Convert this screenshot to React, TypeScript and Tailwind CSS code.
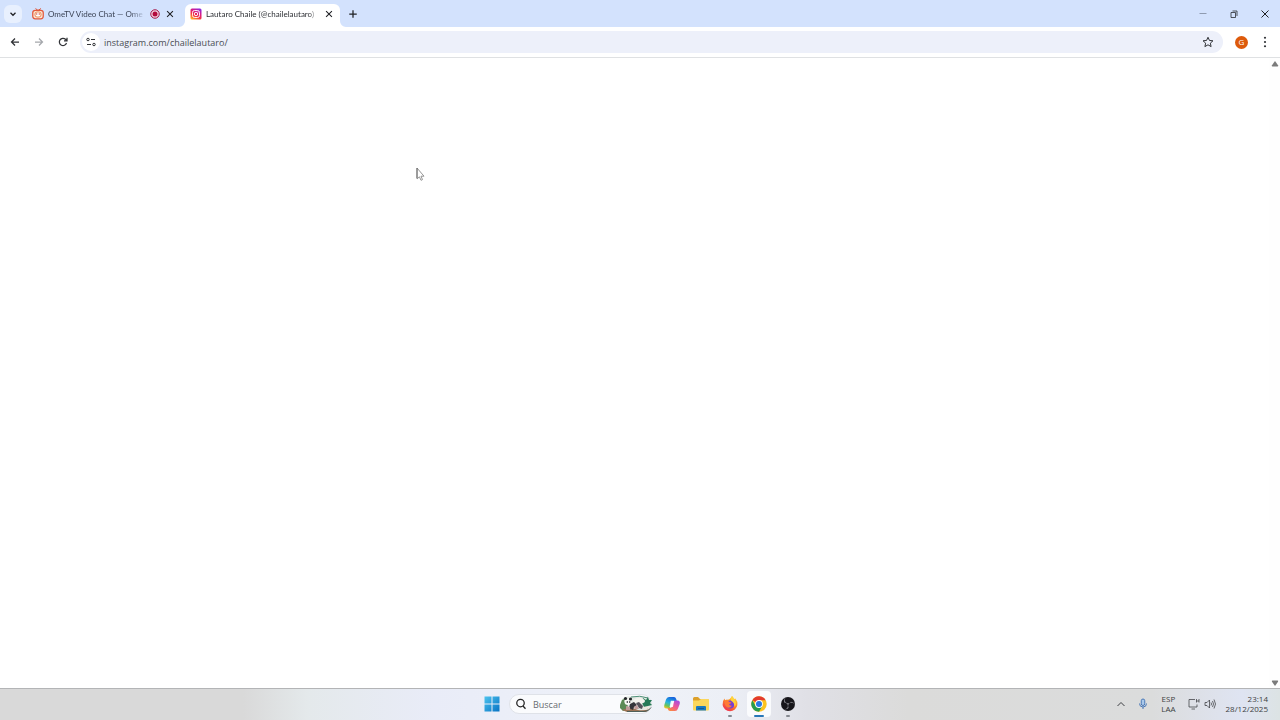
import type { ReactNode } from "react";
import { SiObsstudio } from "react-icons/si";

function Stroke({ className, width = 2, children }: { className: string; width?: number; children: ReactNode }) {
  return (
    <svg
      viewBox="0 0 24 24"
      className={className}
      fill="none"
      stroke="currentColor"
      strokeWidth={width}
      aria-hidden="true"
    >
      {children}
    </svg>
  );
}

function CloseIcon() {
  return (
    <Stroke className="size-[10px]" width={2.5}>
      <path d="M5 5l14 14M19 5L5 19" />
    </Stroke>
  );
}

function OmeTvIcon() {
  return (
    <svg viewBox="0 0 24 24" className="size-3 shrink-0" aria-hidden="true">
      <path d="M7 1l5 4 6-4" fill="none" stroke="#d9573f" strokeWidth="2" />
      <rect x="1.5" y="4.5" width="21" height="17" rx="5" fill="#fbe3d3" stroke="#e2593b" strokeWidth="2.5" />
      <rect x="6" y="8" width="12" height="10" rx="4" fill="#fff" stroke="#ee8a50" strokeWidth="2" />
      <circle cx="9.5" cy="12" r="1.3" fill="#c7392f" />
      <circle cx="14.5" cy="12" r="1.3" fill="#c7392f" />
    </svg>
  );
}

function InstagramIcon() {
  return (
    <svg viewBox="0 0 24 24" className="size-3 shrink-0" aria-hidden="true">
      <defs>
        <linearGradient id="insta" x1="0.2" y1="1" x2="0.8" y2="0">
          <stop offset="0" stopColor="#fdb52c" />
          <stop offset="0.35" stopColor="#f5363f" />
          <stop offset="0.65" stopColor="#d91a87" />
          <stop offset="1" stopColor="#8a2be0" />
        </linearGradient>
      </defs>
      <rect x="1" y="1" width="22" height="22" rx="3" fill="url(#insta)" />
      <rect x="5" y="5" width="14" height="14" rx="4" fill="none" stroke="#fff" strokeWidth="1.8" />
      <circle cx="12" cy="12" r="3.4" fill="none" stroke="#fff" strokeWidth="1.8" />
      <circle cx="16" cy="8" r="1" fill="#fff" />
    </svg>
  );
}

function TabStrip() {
  return (
    <header className="flex h-[27px] items-center bg-[#d3e2fd] pl-1 text-[#1f2024]">
      <button aria-label="Buscar pestañas" className="flex size-[18px] items-center justify-center rounded-md bg-[#e8f0fe]">
        <Stroke className="size-[10px]" width={3}>
          <path d="M6 9l6 6 6-6" />
        </Stroke>
      </button>
      <div className="ml-[10px] flex w-[153px] items-center">
        <OmeTvIcon />
        <button className="ml-1 w-[98px] whitespace-nowrap text-left font-['Lato',sans-serif] text-[8px] leading-3 text-[#3c4456] [mask-image:linear-gradient(to_right,#000_84%,transparent)]">
          OmeTV Video Chat — Ome
        </button>
        <svg viewBox="0 0 20 20" className="ml-1 size-[10px]" aria-hidden="true">
          <circle cx="10" cy="10" r="8.5" fill="#f3d5e3" stroke="#a51546" strokeWidth="2" />
          <circle cx="10" cy="10" r="5" fill="#b3093c" />
        </svg>
        <button aria-label="Cerrar OmeTV" className="ml-[5px]">
          <CloseIcon />
        </button>
      </div>
      <div className="relative flex h-[23px] w-[155px] items-center self-end rounded-t-md bg-white pb-1 pl-[5px]">
        <svg viewBox="0 0 6 6" className="absolute bottom-0 -left-[6px] size-[6px] fill-white" aria-hidden="true">
          <path d="M6 0v6H0a6 6 0 006-6z" />
        </svg>
        <svg viewBox="0 0 6 6" className="absolute -right-[6px] bottom-0 size-[6px] fill-white" aria-hidden="true">
          <path d="M0 0v6h6a6 6 0 01-6-6z" />
        </svg>
        <InstagramIcon />
        <button className="ml-1 w-[112px] whitespace-nowrap text-left font-['Lato',sans-serif] text-[8px] leading-3 text-[#2c2e33] [mask-image:linear-gradient(to_right,#000_92%,transparent)]">
          Lautaro Chaile (@chailelautaro)
        </button>
        <button aria-label="Cerrar Instagram" className="ml-[6px]">
          <CloseIcon />
        </button>
      </div>
      <button aria-label="Nueva pestaña" className="ml-2">
        <Stroke className="size-[10px]" width={3}>
          <path d="M12 3v18M3 12h18" />
        </Stroke>
      </button>
      <div className="ml-auto flex items-center gap-[19px] pr-[9px]">
        <button aria-label="Minimizar" className="text-[#8f9bb0]">
          <Stroke className="size-3">
            <path d="M5 11h14" />
          </Stroke>
        </button>
        <button aria-label="Restaurar">
          <Stroke className="size-3" width={1.5}>
            <path d="M6 9h9v10H6zM9 6h9v10" />
          </Stroke>
        </button>
        <button aria-label="Cerrar">
          <Stroke className="size-3">
            <path d="M5 5l14 14M19 5L5 19" />
          </Stroke>
        </button>
      </div>
    </header>
  );
}

function Toolbar() {
  return (
    <div className="flex h-[31px] items-center border-b border-[#dfe1e3] bg-white pl-[9px] text-[#303236]">
      <nav className="flex items-center gap-3">
        <button aria-label="Atrás">
          <Stroke className="size-3" width={2.5}>
            <path d="M20 12H5M12 5l-7 7 7 7" />
          </Stroke>
        </button>
        <button aria-label="Adelante" className="text-[#a5a8ac]">
          <Stroke className="size-3" width={2.5}>
            <path d="M4 12h15M12 5l7 7-7 7" />
          </Stroke>
        </button>
        <button aria-label="Recargar">
          <Stroke className="size-3" width={2.5}>
            <path d="M19 14a7.300 7.300 0 11-2-7.500l2.500 2.500M20 3.500v6h-6" />
          </Stroke>
        </button>
      </nav>
      <div className="ml-[11px] flex h-[22px] flex-1 items-center rounded-full bg-[#edf0fa] pr-[9px] pl-[2px]">
        <button aria-label="Información del sitio" className="flex size-[18px] items-center justify-center rounded-full bg-white">
          <Stroke className="size-3" width={2}>
            <circle cx="6" cy="7" r="2.500" />
            <path d="M12 7h8M4 17h8" />
            <circle cx="18" cy="17" r="2.500" />
          </Stroke>
        </button>
        <input
          aria-label="Dirección"
          defaultValue="instagram.com/chailelautaro/"
          className="ml-1 h-4 min-w-0 flex-1 bg-transparent text-[9px] text-[#4a4d53] outline-none"
        />
        <button aria-label="Agregar a favoritos">
          <Stroke className="size-3" width={2}>
            <path d="M12 2.500l2.900 6.400 7 .7-5.200 4.700 1.500 6.900L12 17.600l-6.200 3.600 1.500-6.900-5.200-4.700 7-.7z" />
          </Stroke>
        </button>
      </div>
      <button
        aria-label="Perfil"
        className="ml-3 flex size-[13px] items-center justify-center rounded-full bg-[#dd5a0b] text-[8px] leading-none text-white"
      >
        G
      </button>
      <button aria-label="Menú" className="mr-[9px] ml-[11px]">
        <svg viewBox="0 0 24 24" className="size-3" fill="currentColor" aria-hidden="true">
          <circle cx="12" cy="3.500" r="2.200" />
          <circle cx="12" cy="12" r="2.200" />
          <circle cx="12" cy="20.500" r="2.200" />
        </svg>
      </button>
    </div>
  );
}

function Viewport() {
  return (
    <main className="relative flex flex-1 justify-end bg-white">
      <div className="flex w-[11px] flex-col items-center justify-between bg-[#fefefe] pt-[3px] pb-[2px]">
        <svg viewBox="0 0 8 6" className="h-[6px] w-2 fill-[#7b7b7b]" aria-hidden="true">
          <path d="M4 0l3 4.200q.6 1.300-.6 1.300H1.600Q.4 5.500 1 4.200z" />
        </svg>
        <svg viewBox="0 0 8 6" className="h-[6px] w-2 fill-[#7b7b7b]" aria-hidden="true">
          <path d="M4 6l3-4.200Q7.600.5 6.400.5H1.600Q.4.500 1 1.800z" />
        </svg>
      </div>
      <svg viewBox="0 0 10 15" className="absolute top-[109px] left-[416px] h-[15px] w-[10px]" aria-hidden="true">
        <path d="M1 1v11l2.400-2.200 1.600 3.500 1.500-.7L5 9.200h3z" fill="#fff" stroke="#8a8a8a" strokeWidth="0.9" />
        <path d="M1 1v10" stroke="#555" strokeWidth="0.8" />
      </svg>
    </main>
  );
}

function WindowsLogo() {
  return (
    <svg viewBox="0 0 16 16" className="size-4" aria-hidden="true">
      <defs>
        <linearGradient id="win" x1="0" y1="0" x2="1" y2="1">
          <stop offset="0" stopColor="#4cc3ee" />
          <stop offset="1" stopColor="#0873c4" />
        </linearGradient>
      </defs>
      <path d="M.5.500h7v7h-7zM8.500.500h7v7h-7zM.5 8.500h7v7h-7zM8.500 8.500h7v7h-7z" fill="url(#win)" />
    </svg>
  );
}

function PandaArt() {
  return (
    <svg viewBox="0 0 34 18" className="h-[18px] w-[34px] shrink-0" aria-hidden="true">
      <rect x="1.500" y="1.500" width="31" height="15" rx="7.500" fill="#e3e9e4" />
      <path d="M12 2q9-2 17 1" fill="none" stroke="#4d8f78" />
      <path d="M1 10l2-5 4-2 2 5-1 7-4 1-3-3z" fill="#5c8a55" />
      <path d="M23 8l1-5 3 2 2-3 1 3h3l-2 3 2 2-4 1v3l-4-2z" fill="#267a57" />
      <path d="M3 15q8-4 16 0 6 1 12-1l-4 3H8z" fill="#9b7355" />
      <ellipse cx="20" cy="6" rx="6" ry="3" fill="#f4f3ee" />
      <circle cx="9" cy="6.500" r="3.600" fill="#faf9f5" />
      <circle cx="6.500" cy="3.500" r="1.600" fill="#24272a" />
      <circle cx="11.500" cy="4" r="1.600" fill="#24272a" />
      <path d="M7 7l2-1v2zM10 6l2 1-2 1zM11 9l4-2 3 3-3 2-1 3-4-2z" fill="#35353a" />
      <path d="M17 8l3-1 4 4-1 3-3-1z" fill="#55525a" />
      <path d="M7 11l4 1v3H7zM15 12l3-2 2 4h-4z" fill="#c09a9a" />
      <path d="M24 12l5-1 2 2-6 2z" fill="#eee7de" />
      <path d="M8 16.500h17q5 0 7-4" fill="none" stroke="#50605a" />
    </svg>
  );
}

function CopilotIcon() {
  return (
    <svg viewBox="0 0 18 16" className="h-4 w-[18px]" aria-hidden="true">
      <defs>
        <linearGradient id="copA" x1="0.6" y1="0" x2="0.2" y2="1">
          <stop offset="0" stopColor="#1762dd" />
          <stop offset="0.5" stopColor="#24b6de" />
          <stop offset="0.8" stopColor="#72c451" />
          <stop offset="1" stopColor="#f3c522" />
        </linearGradient>
        <linearGradient id="copB" x1="0.8" y1="0" x2="0.2" y2="1">
          <stop offset="0" stopColor="#a84be1" />
          <stop offset="0.5" stopColor="#ed5798" />
          <stop offset="1" stopColor="#fb8d3c" />
        </linearGradient>
      </defs>
      <path d="M6 1h5q1.600 0 2.200 2l.6 2H11q-1.400 0-2 1.600L7.500 11Q7 12.500 5.500 12.500H3.500Q.5 12.500 1.300 9L3 3.500Q3.800 1 6 1z" fill="url(#copA)" />
      <path d="M12 15H7q-1.600 0-2.200-2l-.3-1H7q1.400 0 2-1.600L10.500 6Q11 4.500 12.500 4.500h2Q17.500 4.500 16.700 8L15 12.500Q14.200 15 12 15z" fill="url(#copB)" />
      <path d="M7.800 4.700h3.400L9.900 11H6.600z" fill="#fff" opacity="0.9" />
    </svg>
  );
}

function FolderIcon() {
  return (
    <svg viewBox="0 0 18 16" className="h-4 w-[18px]" aria-hidden="true">
      <path d="M1 2.500Q1 1 2.500 1H6l2 2h7.500Q17 3 17 4.500V8H1z" fill="#dca02a" />
      <path d="M1 4.500h6l2-1.500h7q1 0 1 1v9.500q0 1-1 1H2q-1 0-1-1z" fill="#fbd75c" />
      <path d="M4 14.500V11q0-1 1-1h8q1 0 1 1v3.500z" fill="#1a79bf" />
      <path d="M6 12.500h6" stroke="#125b98" />
    </svg>
  );
}

function FirefoxIcon() {
  return (
    <svg viewBox="0 0 16 16" className="size-4" aria-hidden="true">
      <defs>
        <linearGradient id="fox" x1="0.8" y1="0" x2="0.2" y2="1">
          <stop offset="0" stopColor="#fde047" />
          <stop offset="0.45" stopColor="#ff8a26" />
          <stop offset="1" stopColor="#ed2454" />
        </linearGradient>
      </defs>
      <path d="M10 0q1.500 1.500 2 3l1.500-.6Q16 5.500 15.400 9A7.500 7.500 0 01.6 9Q.2 5 2.500 2.500L3 4.200 5 3.600Q8 4 10 0z" fill="url(#fox)" />
      <circle cx="8.200" cy="8.600" r="4" fill="#7a3fd0" />
      <path d="M2.500 5q3-1.500 5 1l2 .4Q8.500 8 7 8q.6 2.200 3 1.700-2 3-5 1.500Q2.500 9.500 2.500 5z" fill="#ff7a35" />
      <path d="M10 0q1.500 1.500 2 3l1.800 3q.7 3-1.300 5 0-4.500-3-6Q8 3 10 0z" fill="#ffd43b" />
    </svg>
  );
}

function ChromeIcon() {
  return (
    <svg viewBox="0 0 16 16" className="size-4" aria-hidden="true">
      <circle cx="8" cy="8" r="7.700" fill="#fcc31e" />
      <path d="M8 8L1.330 4.150A7.700 7.700 0 0114.670 4.150H8z" fill="#e33b2e" />
      <path d="M1.330 4.150A7.700 7.700 0 008 15.700l3.330-5.770L8 8 4.670 9.930z" fill="#269b4d" />
      <circle cx="8" cy="8" r="3.900" fill="#fff" />
      <circle cx="8" cy="8" r="3" fill="#2878e2" />
    </svg>
  );
}

function ObsIcon() {
  return (
    <span className="flex size-[14px] items-center justify-center overflow-hidden rounded-full bg-[#17161b] text-[#8f8f95]">
      <SiObsstudio className="size-4 shrink-0" aria-hidden="true" />
    </span>
  );
}

const apps = [
  { name: "Copilot", icon: <CopilotIcon />, tile: "", mark: "" },
  { name: "Explorador de archivos", icon: <FolderIcon />, tile: "", mark: "" },
  { name: "Firefox", icon: <FirefoxIcon />, tile: "", mark: "w-1 bg-[#858990]" },
  { name: "Chrome", icon: <ChromeIcon />, tile: "bg-[#fafbfd]", mark: "w-[10px] bg-[#2877b8]" },
  { name: "OBS Studio", icon: <ObsIcon />, tile: "", mark: "w-1 bg-[#858990]" },
];

function Taskbar() {
  return (
    <footer className="grid h-8 grid-cols-[1fr_auto_1fr] items-center border-t border-[#b3b4b6] bg-[linear-gradient(to_right,#d9d9d9_19%,#e4e9eb_24%,#e9ecf8_34%,#eff2f8_50%,#eceff6_57%,#e0e0e6_63%,#dbdbda_71%,#dbdcdc_90%,#dfe4f2_97%,#dce3e4)] pb-px">
      <div />
      <div className="flex items-center pl-1">
        <button aria-label="Inicio" className="mr-[9px]">
          <WindowsLogo />
        </button>
        <label className="mr-2 flex h-5 w-[143px] items-center rounded-full border border-[#dfe2e8] bg-[#fafbfd] pl-[5px]">
          <Stroke className="size-3 shrink-0 text-[#222]" width={2.5}>
            <circle cx="11" cy="10" r="7.500" />
            <path d="M16 16l5 5.500" />
          </Stroke>
          <input
            aria-label="Buscar"
            placeholder="Buscar"
            className="ml-[6px] h-4 w-[86px] bg-transparent text-[9px] outline-none placeholder:text-[#686b70]"
          />
          <PandaArt />
        </label>
        <div className="flex gap-[5px]">
          {apps.map((app) => (
            <button
              key={app.name}
              aria-label={app.name}
              className={`relative flex h-[26px] w-6 items-center justify-center rounded ${app.tile}`}
            >
              {app.icon}
              {app.mark && <span className={`absolute bottom-0 h-[2px] rounded-full ${app.mark}`} />}
            </button>
          ))}
        </div>
      </div>
      <div className="flex items-center justify-end pr-3 text-[8px] leading-[10px] text-[#3c3e42]">
        <button aria-label="Mostrar iconos ocultos" className="shrink-0">
          <Stroke className="size-3" width={2}>
            <path d="M5 16L12 9L19 16" />
          </Stroke>
        </button>
        <button aria-label="Micrófono" className="ml-[10px] text-[#4a79b8]">
          <Stroke className="size-3" width={2}>
            <rect x="8.500" y="2" width="7" height="13" rx="3.500" fill="#a9c8ea" />
            <path d="M5 11q0 7 7 7t7-7M12 18v4" />
          </Stroke>
        </button>
        <button className="ml-3 text-center">
          ESP
          <br />
          LAA
        </button>
        <button aria-label="Red y volumen" className="ml-3 flex items-center gap-1">
          <Stroke className="size-3" width={1.5}>
            <path d="M14 3H2v15h16v-5M7 22h7M17 2v7M22 2v7M17 6h5" />
          </Stroke>
          <Stroke className="size-3" width={1.5}>
            <path d="M2 9h4l5-5v16l-5-5H2zM14 9q2 3 0 6M17 6q4 6 0 12M20 3q6 9 0 18" />
          </Stroke>
        </button>
        <button className="ml-[10px] text-right">
          23:14
          <br />
          28/12/2025
        </button>
      </div>
    </footer>
  );
}

export default function App() {
  return (
    <div className="flex h-screen flex-col overflow-hidden bg-white font-['Open_Sans',sans-serif]">
      <TabStrip />
      <Toolbar />
      <Viewport />
      <Taskbar />
    </div>
  );
}
